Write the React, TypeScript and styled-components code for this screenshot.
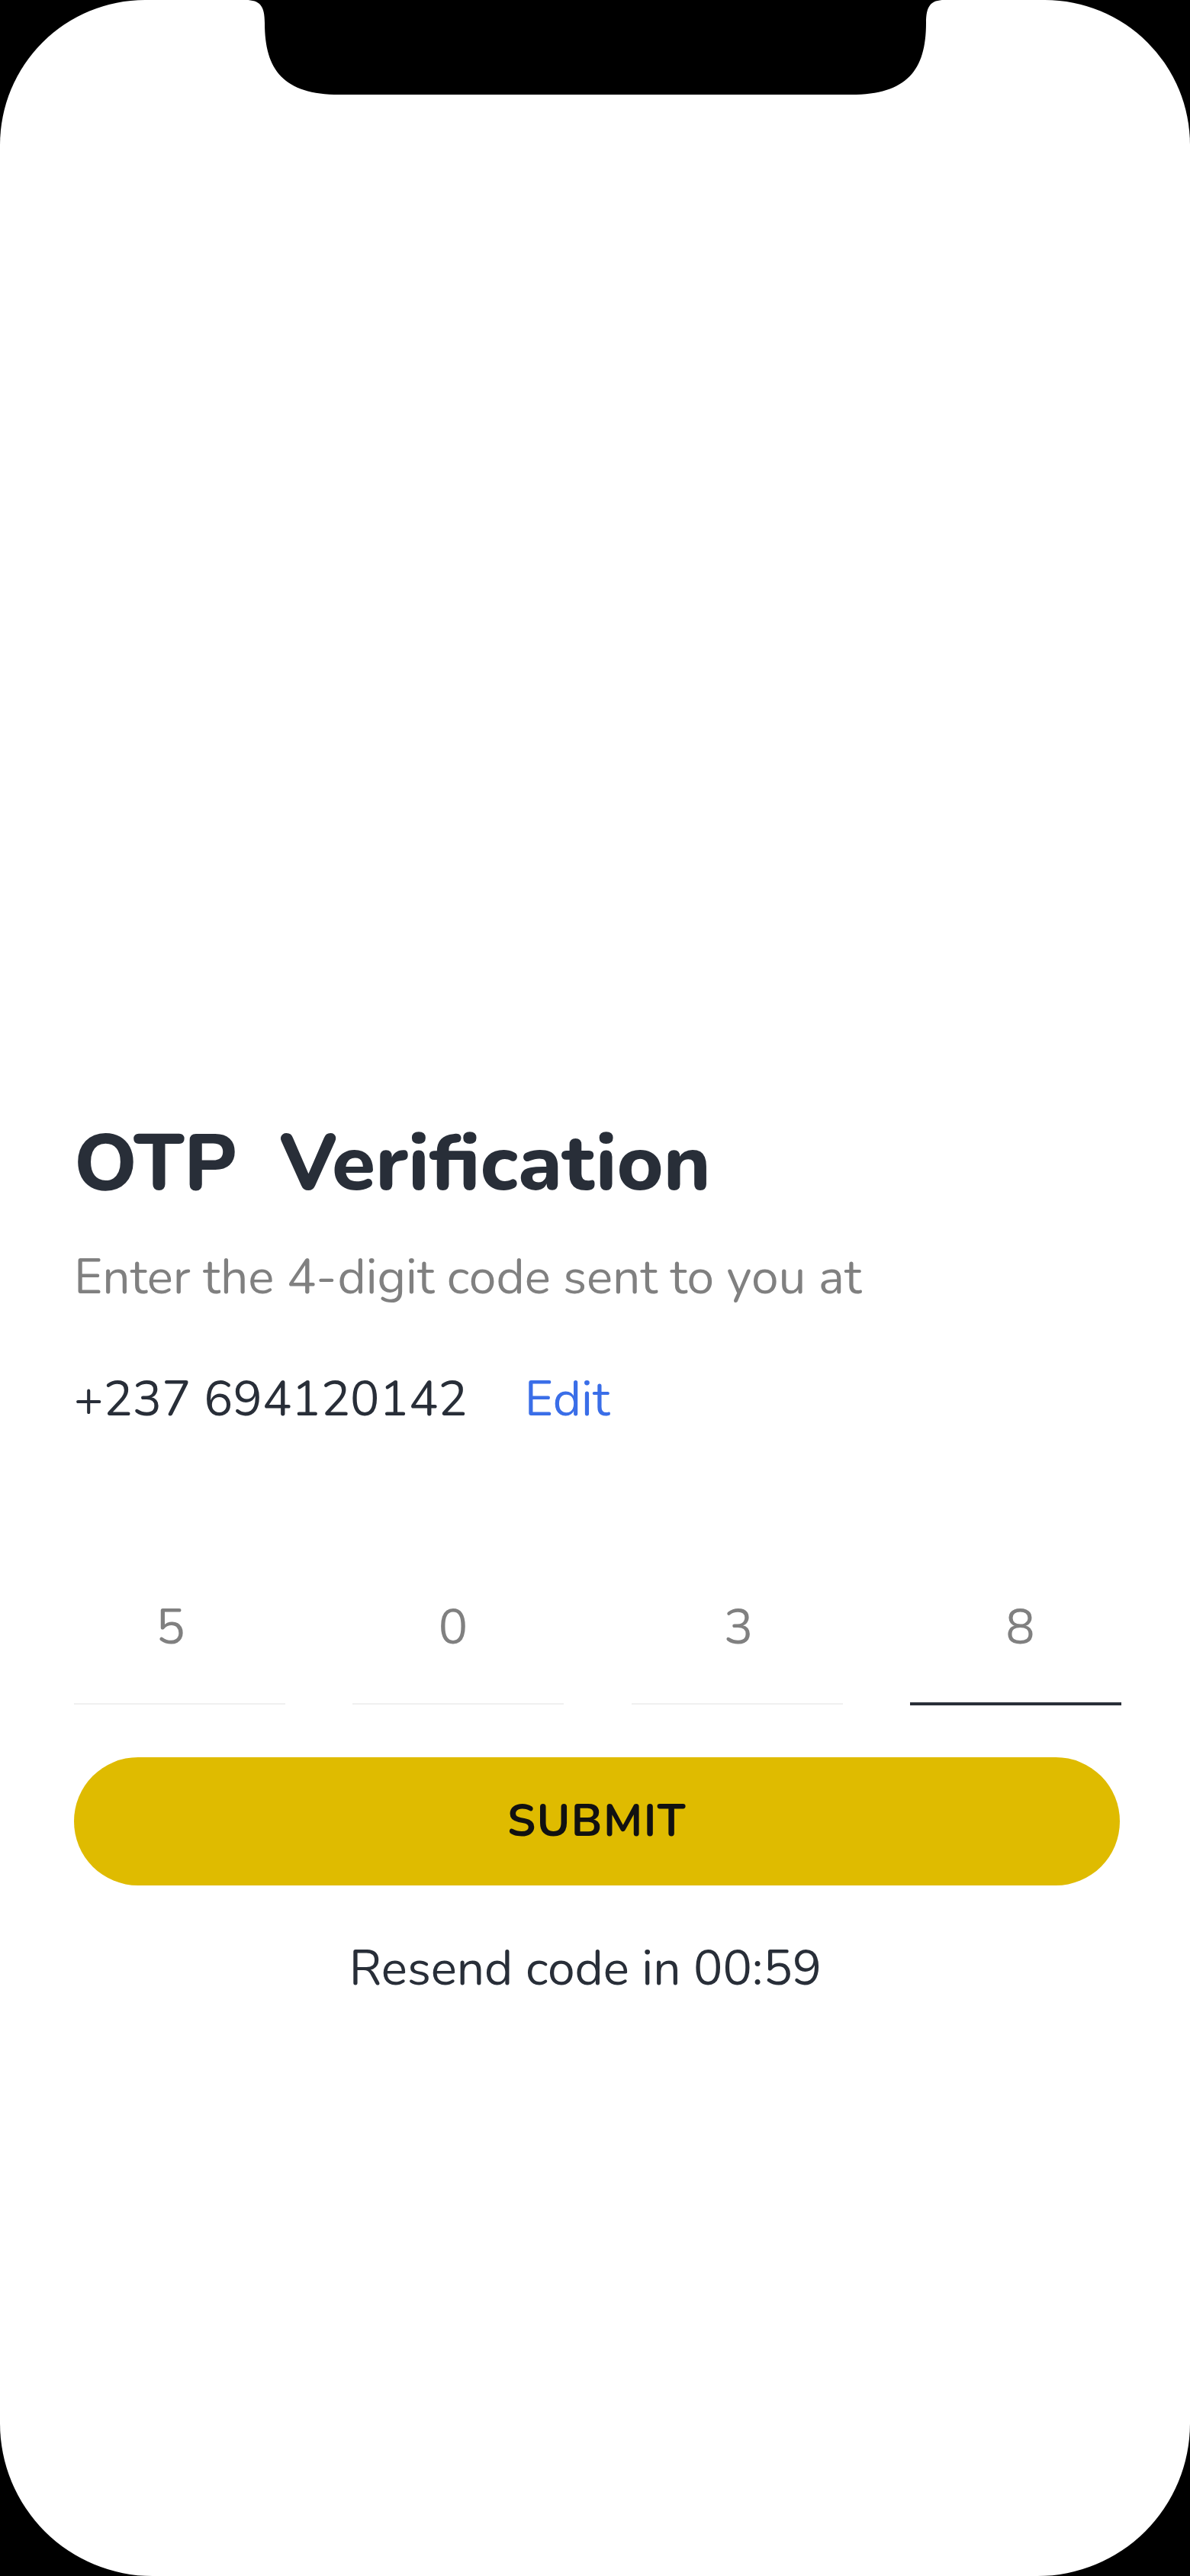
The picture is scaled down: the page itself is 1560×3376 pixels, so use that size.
import React from "react";
import styled, { createGlobalStyle } from "styled-components";

const GlobalStyle = createGlobalStyle`
  html, body {
    margin: 0;
    padding: 0;
    background: #000000;
  }
  * { box-sizing: border-box; }
`;

const FONT = `"Nunito", "Lato", "Noto Sans", sans-serif`;

const Screen = styled.div`
  position: relative;
  width: 1560px;
  height: 3376px;
  background: #ffffff;
  border-radius: 190px 190px 200px 200px;
  overflow: hidden;
  font-family: ${FONT};
  padding: 1463px 90px 0 97px;
`;

const Notch = styled.svg`
  position: absolute;
  top: 0;
  left: 0;
  width: 1560px;
  height: 130px;
`;

const Content = styled.main`
  display: flex;
  flex-direction: column;
  width: 1373px;
`;

const Title = styled.h1`
  margin: 0;
  font-size: 104px;
  line-height: 1.2;
  font-weight: 800;
  color: #282e38;
  word-spacing: 27px;
`;

const Subtitle = styled.p`
  margin: 48px 0 0;
  font-size: 64px;
  line-height: 1.2;
  color: #808080;
`;

const PhoneRow = styled.div`
  margin-top: 83px;
  display: flex;
  align-items: baseline;
  gap: 75px;
  font-size: 64px;
  line-height: 1.2;
`;

const Phone = styled.span`
  color: #282e38;
`;

const EditLink = styled.a`
  color: #3a6ee8;
  text-decoration: none;
  cursor: pointer;
`;

const CodeRow = styled.div`
  margin-top: 223px;
  display: grid;
  grid-template-columns: repeat(4, 277px);
  justify-content: space-between;
`;

const Cell = styled.div`
  display: flex;
  flex-direction: column;
  align-items: stretch;
`;

const Digit = styled.span<{ $nudge: number }>`
  font-size: 64px;
  line-height: 1.2;
  color: #808080;
  text-align: center;
  transform: translateX(${(p) => p.$nudge}px);
`;

const Line = styled.div<{ $active: boolean }>`
  margin-top: ${(p) => (p.$active ? 59 : 60)}px;
  margin-bottom: ${(p) => (p.$active ? 0 : 1)}px;
  height: ${(p) => (p.$active ? 4 : 2)}px;
  background: ${(p) => (p.$active ? "#2a2f38" : "#f0f0f0")};
`;

const SubmitButton = styled.button`
  margin-top: 68px;
  height: 168px;
  width: 1371px;
  border: none;
  border-radius: 84px;
  background: #dfbb00;
  color: #111111;
  font-family: ${FONT};
  font-size: 59px;
  font-weight: 700;
  line-height: 1.2;
  letter-spacing: 1.5px;
  padding: 0;
  display: flex;
  align-items: center;
  justify-content: center;
  cursor: pointer;
`;

const Resend = styled.p`
  margin: 71px 0 0;
  font-size: 64px;
  line-height: 1.2;
  color: #282e38;
  text-align: center;
  padding-right: 32px;
`;

const code = [
  { value: "5", nudge: -12 },
  { value: "0", nudge: -7 },
  { value: "3", nudge: 2 },
  { value: "8", nudge: 6 },
];

export default function App() {
  return (
    <>
      <GlobalStyle />
      <Screen>
        <Notch viewBox="0 0 1560 130" aria-hidden="true">
          <path
            d="M 322 0 C 341 0 347 8 347 30 C 347 92 372 124 445 124 L 1116 124 C 1189 124 1214 92 1214 30 C 1214 8 1220 0 1238 0 Z"
            fill="#000000"
          />
        </Notch>
        <Content>
          <Title>OTP Verification</Title>
          <Subtitle>Enter the 4-digit code sent to you at</Subtitle>
          <PhoneRow>
            <Phone>+237 694120142</Phone>
            <EditLink>Edit</EditLink>
          </PhoneRow>
          <CodeRow>
            {code.map((d, i) => (
              <Cell key={i}>
                <Digit $nudge={d.nudge}>{d.value}</Digit>
                <Line $active={i === code.length - 1} />
              </Cell>
            ))}
          </CodeRow>
          <SubmitButton>SUBMIT</SubmitButton>
          <Resend>Resend code in 00:59</Resend>
        </Content>
      </Screen>
    </>
  );
}
